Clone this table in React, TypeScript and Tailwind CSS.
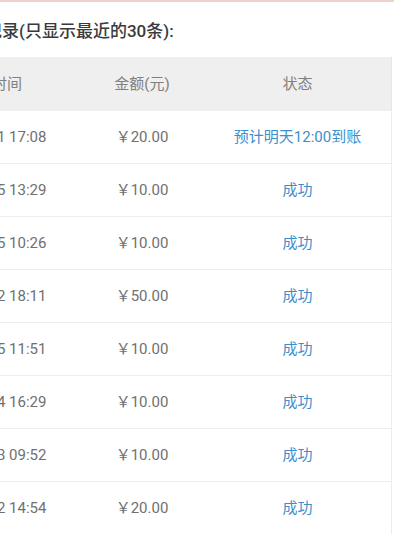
import React from "react";

const rows = [
  { t: "01-21 17:08", m: "￥20.00", s: "预计明天12:00到账" },
  { t: "01-15 13:29", m: "￥10.00", s: "成功" },
  { t: "01-15 10:26", m: "￥10.00", s: "成功" },
  { t: "01-12 18:11", m: "￥50.00", s: "成功" },
  { t: "01-05 11:51", m: "￥10.00", s: "成功" },
  { t: "01-04 16:29", m: "￥10.00", s: "成功" },
  { t: "01-03 09:52", m: "￥10.00", s: "成功" },
  { t: "01-02 14:54", m: "￥20.00", s: "成功" },
];

export default function App() {
  return (
    <div
      className="w-[394px] h-[534px] overflow-hidden bg-white"
      style={{ fontFamily: "Roboto, 'Noto Sans CJK SC', sans-serif" }}
    >
      <div className="h-[2px] bg-[#ecd2ca]" />
      <div className="ml-[-60px] w-[452px]">
        <div className="h-[55px] flex items-center pt-[4px] pl-[11px] text-[17px] font-medium text-[#3a3a3a]">
          提现记录(只显示最近的30条):
        </div>
        <div className="grid grid-cols-[134px_136px_182px] h-[54px] items-center bg-[#efefef] text-[15px] text-[#808080] border-r border-[#e6e6e6]">
          <div className="text-center">时间</div>
          <div className="text-center">金额(元)</div>
          <div className="text-center pr-[7px]">状态</div>
        </div>
        {rows.map((r, i) => (
          <div
            key={i}
            className="grid grid-cols-[134px_136px_182px] h-[53px] items-center border-b border-r border-[#ededed] text-[15px]"
          >
            <div className="text-center text-[#707070]">{r.t}</div>
            <div className="text-center text-[#707070]">{r.m}</div>
            <div className="text-center pr-[7px] text-[#3d8fcb]">{r.s}</div>
          </div>
        ))}
      </div>
    </div>
  );
}
